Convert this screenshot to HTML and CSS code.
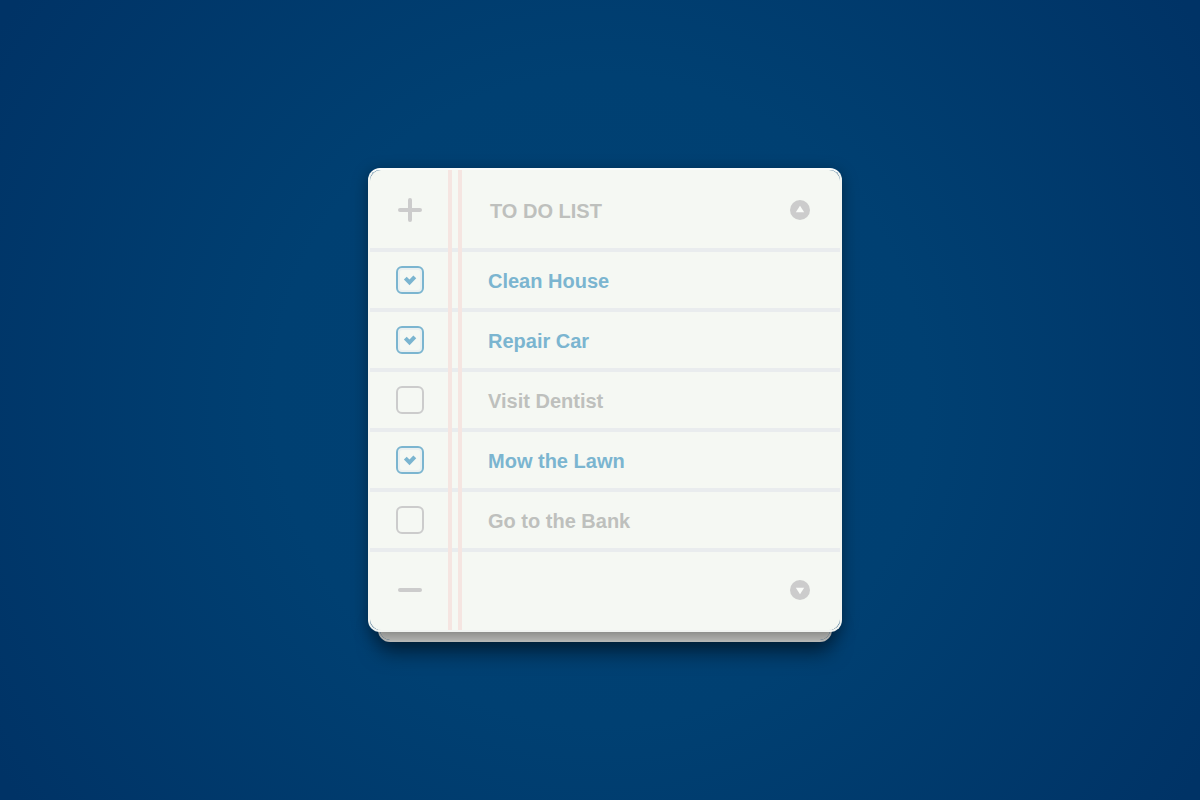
FILE: index.html
```html
<!DOCTYPE html>
<html lang="en">
<head>
<meta charset="utf-8">
<meta name="viewport" content="width=device-width, initial-scale=1">
<title>To Do List</title>
<link rel="stylesheet" href="styles.css">
</head>
<body>
<main class="page">
  <section class="pad" aria-labelledby="list-title">
    <div class="sheet">
      <div class="paper">
        <header class="row row-head">
          <span class="cell"><button class="icon-button" type="button" aria-label="Add item"><svg class="icon" viewBox="0 0 24 24"><path class="stroke" d="M2 12H22M12 2V22"/></svg></button></span>
          <h1 class="title" id="list-title">TO DO LIST</h1>
          <button class="icon-button" type="button" aria-label="Scroll up"><svg class="icon-small" viewBox="0 0 20 20"><circle class="disc" cx="10" cy="10" r="10"/><path class="arrow" d="M10 5.8L14.2 12.2H5.8Z"/></svg></button>
        </header>
        <ul class="items">
          <li class="row"><span class="cell"><input class="box" type="checkbox" id="item-1" checked><svg class="tick" viewBox="0 0 28 28"><path d="M9.3 12.2L13.5 16.4L18.8 10.8"/></svg></span><label class="text" for="item-1">Clean House</label></li>
          <li class="row"><span class="cell"><input class="box" type="checkbox" id="item-2" checked><svg class="tick" viewBox="0 0 28 28"><path d="M9.3 12.2L13.5 16.4L18.8 10.8"/></svg></span><label class="text" for="item-2">Repair Car</label></li>
          <li class="row"><span class="cell"><input class="box" type="checkbox" id="item-3"><svg class="tick" viewBox="0 0 28 28"><path d="M9.3 12.2L13.5 16.4L18.8 10.8"/></svg></span><label class="text" for="item-3">Visit Dentist</label></li>
          <li class="row"><span class="cell"><input class="box" type="checkbox" id="item-4" checked><svg class="tick" viewBox="0 0 28 28"><path d="M9.3 12.2L13.5 16.4L18.8 10.8"/></svg></span><label class="text" for="item-4">Mow the Lawn</label></li>
          <li class="row"><span class="cell"><input class="box" type="checkbox" id="item-5"><svg class="tick" viewBox="0 0 28 28"><path d="M9.3 12.2L13.5 16.4L18.8 10.8"/></svg></span><label class="text" for="item-5">Go to the Bank</label></li>
        </ul>
        <footer class="row row-foot">
          <span class="cell"><button class="icon-button" type="button" aria-label="Remove item"><svg class="icon" viewBox="0 0 24 24"><path class="stroke" d="M2 12H22"/></svg></button></span>
          <button class="icon-button" type="button" aria-label="Scroll down"><svg class="icon-small" viewBox="0 0 20 20"><circle class="disc" cx="10" cy="10" r="10"/><path class="arrow" d="M10 14.2L14.2 7.8H5.8Z"/></svg></button>
        </footer>
      </div>
    </div>
  </section>
</main>
</body>
</html>
```
FILE: styles.css
```css
*,
*::before,
*::after {
  box-sizing: border-box;
}

body {
  margin: 0;
  font-family: "Liberation Sans", Arial, sans-serif;
  background: #003366;
}

.page {
  min-height: 100vh;
  padding: 24px 10px 24px 20px;
  display: grid;
  align-items: center;
  justify-items: center;
  background: radial-gradient(circle, #004274 0%, #004072 45%, #003366 98%);
}

.pad {
  position: relative;
  z-index: 0;
  width: 100%;
  max-width: 474px;
}

/* Lower sheet peeking out below the top one */
.pad::after {
  content: "";
  position: absolute;
  z-index: -1;
  left: 10px;
  right: 10px;
  bottom: -10px;
  height: 30px;
  border: 2px solid #c9cac8;
  border-radius: 12px;
  background: #c5c6c3 padding-box;
  box-shadow: 0 10px 20px rgba(0, 0, 0, 0.5);
}

.sheet {
  border: 2px solid #f1f4f1;
  border-top-color: #fafcfb;
  border-radius: 12px;
  box-shadow: 0 4px 16px rgba(0, 0, 0, 0.4);
}

.paper {
  position: relative;
  border-radius: 11px;
  background: #f5f8f3;
}

/* Double margin rule */
.paper::after {
  content: "";
  position: absolute;
  top: 0;
  bottom: 0;
  left: 78px;
  width: 14px;
  border: solid #f5e5e1;
  border-width: 0 4px;
  pointer-events: none;
}

.items {
  margin: 0;
  padding: 0;
  list-style: none;
}

.row {
  display: flex;
  align-items: center;
  height: 60px;
  padding-right: 30px;
  border: solid #e9ecee;
  border-width: 2px 0;
}

.row-head,
.row-foot {
  height: 80px;
  justify-content: space-between;
}

.row-head {
  border-top-color: transparent;
}

.row-foot {
  border-bottom-color: transparent;
}

.cell {
  flex: none;
  width: 80px;
  display: grid;
  place-items: center;
}

.title,
.text {
  flex: 1;
  padding-left: 38px;
  padding-top: 2px;
  font-size: 20px;
  line-height: 24px;
  font-weight: bold;
  color: #bec0bd;
}

.title {
  margin: 0;
  padding-left: 40px;
}

.row:has(.box:checked) .text {
  color: #7bb5d0;
}

.box {
  grid-area: 1 / 1;
  appearance: none;
  width: 28px;
  height: 28px;
  margin: 0;
  border: 2px solid #cccccc;
  border-radius: 6px;
}

.box:checked {
  border-color: #7bb5d0;
  box-shadow: inset 0 0 0 2px #eaf0f0;
}

.tick {
  grid-area: 1 / 1;
  width: 28px;
  height: 28px;
  visibility: hidden;
  pointer-events: none;
  fill: none;
  stroke: #7bb5d0;
  stroke-width: 4;
}

.box:checked + .tick {
  visibility: visible;
}

.icon-button {
  display: grid;
  padding: 0;
  border: 0;
  background: none;
  cursor: pointer;
}

.icon {
  width: 24px;
  height: 24px;
}

.icon-small {
  width: 20px;
  height: 20px;
}

.stroke {
  fill: none;
  stroke: #cccccc;
  stroke-width: 4;
  stroke-linecap: round;
}

.disc {
  fill: #cccccc;
}

.arrow {
  fill: #fafcf9;
}
```
